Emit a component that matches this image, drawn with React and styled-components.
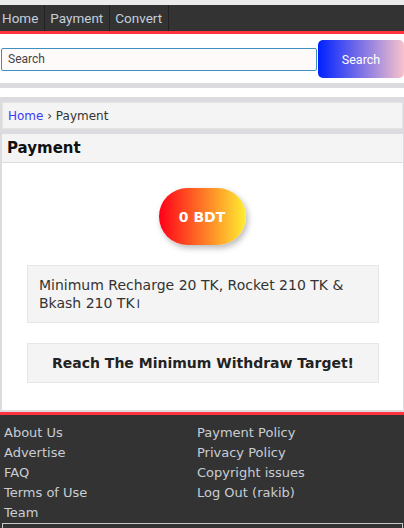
import React from "react";
import styled, { createGlobalStyle } from "styled-components";

const GlobalStyle = createGlobalStyle`
  * { box-sizing: border-box; }
  body {
    margin: 0;
    background: #ebebeb;
    font-family: "DejaVu Sans", Verdana, sans-serif;
  }
`;

const Page = styled.div`
  padding-top: 5px;
`;

const Nav = styled.nav`
  display: flex;
  height: 29px;
  background: #333;
  border-bottom: 3px solid #ff333d;
`;

const NavItem = styled.a`
  display: flex;
  align-items: center;
  padding: 0 6px 0 5px;
  border-right: 1px solid #222;
  color: #c3cfdc;
  font-family: Roboto, Arial, sans-serif;
  font-size: 13.5px;
  text-decoration: none;
  &:first-child {
    padding-left: 2px;
  }
`;

const SearchBar = styled.form`
  display: flex;
  align-items: center;
  background: #fff;
  padding: 6px 0 5px 1px;
`;

const SearchInput = styled.input`
  flex: 1;
  height: 23px;
  padding: 0 6px;
  border: 1px solid #3f8fbf;
  border-radius: 2px;
  background: #fffafa;
  font-family: Roboto, Arial, sans-serif;
  font-size: 12px;
  color: #333;
  outline: none;
  &::placeholder {
    color: #444;
  }
`;

const SearchButton = styled.button`
  width: 86px;
  height: 38px;
  margin-left: 1px;
  border: none;
  border-radius: 5px;
  background: linear-gradient(to right, #0022ff, #f8c2cc);
  color: #fff;
  font-family: Roboto, Arial, sans-serif;
  font-size: 12.5px;
`;

const Main = styled.main`
  display: flex;
  flex-direction: column;
  gap: 5px;
  background: #dcdce0;
  padding: 5px 1px 2px 2px;
`;

const Blank = styled.div`
  height: 9px;
  margin: 0 -1px 0 -2px;
  background: #fff;
`;

const Breadcrumb = styled.div`
  height: 27px;
  display: flex;
  align-items: center;
  padding: 0 5px;
  background: #f4f4f4;
  border: 1px solid #e4e4e4;
  font-size: 12px;
  color: #333;
`;

const Crumb = styled.a`
  color: #3b3bf5;
  text-decoration: none;
`;

const Panel = styled.section`
  background: #fff;
`;

const PanelHeader = styled.h2`
  margin: 0;
  height: 29px;
  display: flex;
  align-items: center;
  padding: 0 5px;
  background: #f4f4f4;
  border-bottom: 1px solid #dcdcdc;
  font-size: 15px;
  font-weight: bold;
  color: #111;
`;

const PanelBody = styled.div`
  display: flex;
  flex-direction: column;
  align-items: center;
  gap: 20px;
  padding: 25px 24px 27px 25px;
`;

const Balance = styled.div`
  width: 87px;
  height: 57px;
  margin-left: -2px;
  display: flex;
  align-items: center;
  justify-content: center;
  border-radius: 29px;
  background: linear-gradient(to right, #ff0018, #ffee33);
  box-shadow: 2px 3px 6px rgba(0, 0, 0, 0.28);
  color: #fff;
  font-size: 14px;
  font-weight: bold;
`;

const InfoBox = styled.div`
  align-self: stretch;
  padding: 10px 11px;
  background: #f4f4f4;
  border: 1px solid #e6e6e6;
  font-size: 14px;
  line-height: 18px;
  color: #333;
`;

const TargetBox = styled(InfoBox)`
  text-align: center;
  font-weight: bold;
  color: #222;
`;

const Footer = styled.footer`
  background: #333;
  border-top: 3px solid #ff333d;
  padding: 8px 0 0;
`;

const Links = styled.div`
  display: grid;
  grid-template-columns: 193px 1fr;
  padding: 0 4px;
`;

const FooterLink = styled.a`
  font-size: 13px;
  line-height: 20px;
  color: #c9cdd3;
  text-decoration: none;
`;

const Copy = styled.div`
  height: 20px;
  margin: 0 1px 0 2px;
  border: 1px solid #c8c8c8;
  border-bottom: none;
`;

const footerLinks = [
  "About Us",
  "Payment Policy",
  "Advertise",
  "Privacy Policy",
  "FAQ",
  "Copyright issues",
  "Terms of Use",
  "Log Out (rakib)",
  "Team",
];

export default function App() {
  return (
    <Page>
      <GlobalStyle />
      <Nav>
        <NavItem href="#">Home</NavItem>
        <NavItem href="#">Payment</NavItem>
        <NavItem href="#">Convert</NavItem>
      </Nav>
      <SearchBar onSubmit={(e) => e.preventDefault()}>
        <SearchInput placeholder="Search" />
        <SearchButton type="submit">Search</SearchButton>
      </SearchBar>
      <Main>
        <Blank />
        <Breadcrumb>
          <Crumb href="#">Home</Crumb>&nbsp;›&nbsp;Payment
        </Breadcrumb>
        <Panel>
          <PanelHeader>Payment</PanelHeader>
          <PanelBody>
            <Balance>0 BDT</Balance>
            <InfoBox>Minimum Recharge 20 TK, Rocket 210 TK &amp; Bkash 210 TK।</InfoBox>
            <TargetBox>Reach The Minimum Withdraw Target!</TargetBox>
          </PanelBody>
        </Panel>
      </Main>
      <Footer>
        <Links>
          {footerLinks.map((l) => (
            <FooterLink key={l} href="#">
              {l}
            </FooterLink>
          ))}
        </Links>
        <Copy />
      </Footer>
    </Page>
  );
}
